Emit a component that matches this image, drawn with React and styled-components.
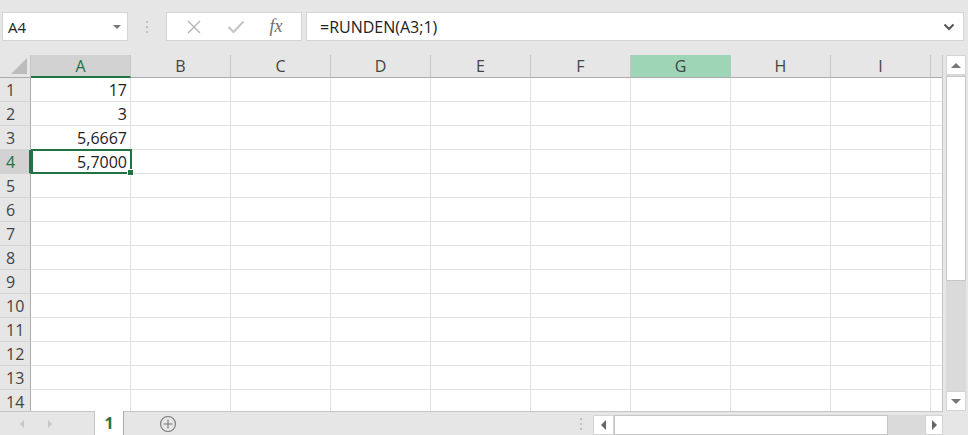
import React from "react";
import styled, { createGlobalStyle } from "styled-components";

const Global = createGlobalStyle`
  html, body { margin: 0; padding: 0; background: #e6e6e6; }
  body { font-family: "Open Sans", "Noto Sans", sans-serif; }
`;

const Root = styled.div`
  width: 968px;
  height: 435px;
  background: #e6e6e6;
  display: flex;
  flex-direction: column;
  overflow: hidden;
`;

const TopBar = styled.div`
  height: 55px;
  flex-shrink: 0;
  display: flex;
  align-items: flex-start;
  padding: 12px 4px 0 2px;
  box-sizing: border-box;
`;

const Box = styled.div`
  height: 29px;
  box-sizing: border-box;
  background: #fff;
  border: 1px solid #d4d4d4;
  display: flex;
  align-items: center;
`;

const NameBox = styled(Box)`
  width: 126px;
  padding: 0 6px 0 5px;
  justify-content: space-between;
  font-size: 15px;
  color: #222;
`;

const Dots = styled.div`
  width: 38px;
  height: 29px;
  display: flex;
  flex-direction: column;
  align-items: center;
  justify-content: center;
  gap: 3px;
  span {
    width: 2px;
    height: 2px;
    background: #b4b4b4;
    border-radius: 1px;
  }
`;

const FxBox = styled(Box)`
  width: 136px;
  justify-content: space-around;
  padding: 0 6px;
`;

const FormulaBox = styled(Box)`
  flex: 1;
  margin-left: 4px;
  padding: 0 8px 0 13px;
  justify-content: space-between;
  font-size: 16px;
  color: #222;
`;

const Fx = styled.span`
  font-family: "Liberation Serif", serif;
  font-style: italic;
  font-size: 18px;
  color: #6d6d6d;
`;

const Middle = styled.div`
  display: flex;
  height: 357px;
  flex-shrink: 0;
`;

const Sheet = styled.div`
  width: 943px;
  height: 357px;
  overflow: hidden;
  display: grid;
  grid-template-columns: 31px repeat(9, 100px) 12px;
  grid-template-rows: 23px repeat(14, 24px);
  border-right: 1px solid #c6c6c6;
  box-sizing: border-box;
  border-bottom: 1px solid #c6c6c6;
`;

const Corner = styled.div`
  background: #e6e6e6;
  border-right: 1px solid #c6c6c6;
  border-bottom: 1px solid #ababab;
  box-sizing: border-box;
  position: relative;
  &::after {
    content: "";
    position: absolute;
    right: 3px;
    bottom: 3px;
    border-style: solid;
    border-width: 0 0 16px 16px;
    border-color: transparent transparent #bcbcbc transparent;
  }
`;

const ColHead = styled.div`
  background: ${(p) => (p.$sel ? "#d2d2d2" : p.$hl ? "#9fd5b7" : "#e6e6e6")};
  border-right: 1px solid ${(p) => (p.$hl ? "#9fd5b7" : "#c6c6c6")};
  border-bottom: ${(p) => (p.$sel ? "2px solid #217346" : "1px solid #ababab")};
  box-sizing: border-box;
  display: flex;
  align-items: center;
  justify-content: center;
  font-size: 16px;
  color: ${(p) => (p.$sel ? "#217346" : "#444")};
  padding-top: ${(p) => (p.$sel ? "1px" : "0")};
`;

const RowHead = styled.div`
  background: ${(p) => (p.$sel ? "#d2d2d2" : "#e6e6e6")};
  border-right: ${(p) => (p.$sel ? "2px solid #217346" : "1px solid #ababab")};
  border-bottom: 1px solid #d4d4d4;
  box-sizing: border-box;
  display: flex;
  align-items: center;
  padding-left: 6px;
  font-size: 16px;
  color: ${(p) => (p.$sel ? "#217346" : "#444")};
`;

const Cell = styled.div`
  background: #fff;
  border-right: 1px solid #e1e1e1;
  border-bottom: 1px solid #e1e1e1;
  box-sizing: border-box;
  display: flex;
  align-items: center;
  justify-content: flex-end;
  padding-right: 3px;
  font-size: 16px;
  color: #222;
  position: relative;
  ${(p) => (p.$active ? "z-index: 3;" : "")}
`;

const Selection = styled.div`
  position: absolute;
  left: 0;
  top: -1px;
  right: -2px;
  bottom: -1px;
  border: 2px solid #217346;
  pointer-events: none;
  z-index: 2;
  &::after {
    content: "";
    position: absolute;
    right: -4px;
    bottom: -4px;
    width: 5px;
    height: 5px;
    background: #217346;
    border: 1px solid #fff;
  }
`;

const CellText = styled.span`
  position: relative;
  z-index: 1;
`;

const ScrollGap = styled.div`
  width: 25px;
  display: flex;
  justify-content: flex-end;
  padding: 0 2px 0 0;
  box-sizing: border-box;
`;

const VScroll = styled.div`
  width: 20px;
  display: flex;
  flex-direction: column;
  background: #dadada;
  height: 356px;
`;

const SBtn = styled.div`
  width: ${(p) => p.$w || "20px"};
  height: ${(p) => p.$h || "20px"};
  background: #fff;
  border: 1px solid #d4d4d4;
  box-sizing: border-box;
  display: flex;
  align-items: center;
  justify-content: center;
  flex-shrink: 0;
`;

const Thumb = styled.div`
  background: #fff;
  border: 1px solid #c6c6c6;
  box-sizing: border-box;
  ${(p) => (p.$v ? "height: 205px; margin-top: 1px;" : "width: 274px; height: 100%;")}
`;

const Tri = styled.span`
  width: 0;
  height: 0;
  border-style: solid;
  ${(p) =>
    p.$dir === "up"
      ? `border-width: 0 5px 5px 5px; border-color: transparent transparent ${p.$c || "#666"} transparent;`
      : p.$dir === "down"
      ? `border-width: 5px 5px 0 5px; border-color: ${p.$c || "#666"} transparent transparent transparent;`
      : p.$dir === "left"
      ? `border-width: 5px 5px 5px 0; border-color: transparent ${p.$c || "#666"} transparent transparent;`
      : `border-width: 5px 0 5px 5px; border-color: transparent transparent transparent ${p.$c || "#666"};`}
`;

const Bottom = styled.div`
  height: 23px;
  display: flex;
  align-items: stretch;
`;

const NavArrows = styled.div`
  width: 94px;
  display: flex;
  align-items: center;
  padding-left: 20px;
  gap: 24px;
  box-sizing: border-box;
`;

const Tab = styled.div`
  width: 30px;
  background: #fff;
  border-left: 1px solid #c6c6c6;
  border-right: 1px solid #ababab;
  margin-top: -1px;
  box-sizing: border-box;
  display: flex;
  align-items: center;
  justify-content: center;
  font-weight: 700;
  font-size: 16px;
  color: #217346;
`;

const AddArea = styled.div`
  width: 445px;
  display: flex;
  align-items: center;
  padding-left: 35px;
  box-sizing: border-box;
`;

const HDots = styled(Dots)`
  width: 24px;
  height: 23px;
`;

const HScroll = styled.div`
  width: 350px;
  display: flex;
  background: #dadada;
  margin-top: 3px;
  height: 20px;
`;

const Track = styled.div`
  flex: 1;
`;

const Chevron = () => (
  <svg width="12" height="8" viewBox="0 0 12 8">
    <path d="M1.5 1.5 L6 6 L10.5 1.5" fill="none" stroke="#555" strokeWidth="2" />
  </svg>
);

const XIcon = () => (
  <svg width="16" height="16" viewBox="0 0 16 16">
    <path d="M2 2 L14 14 M14 2 L2 14" stroke="#b3b3b3" strokeWidth="1.3" />
  </svg>
);

const CheckIcon = () => (
  <svg width="18" height="14" viewBox="0 0 18 14">
    <path d="M1.5 7 L6.5 12 L16.5 1.5" fill="none" stroke="#c4c4c4" strokeWidth="2" />
  </svg>
);

const PlusIcon = () => (
  <svg width="18" height="18" viewBox="0 0 18 18">
    <circle cx="9" cy="9" r="7.5" fill="none" stroke="#777" strokeWidth="1.1" />
    <path d="M9 4.5 V13.5 M4.5 9 H13.5" stroke="#777" strokeWidth="1.1" />
  </svg>
);

const cols = ["A", "B", "C", "D", "E", "F", "G", "H", "I", ""];
const values = { 1: "17", 2: "3", 3: "5,6667", 4: "5,7000" };

export default function App() {
  const rows = Array.from({ length: 14 }, (_, i) => i + 1);
  return (
    <Root>
      <Global />
      <TopBar>
        <NameBox>
          <span>A4</span>
          <Tri $dir="down" $c="#777" style={{ borderWidth: "4px 4px 0 4px" }} />
        </NameBox>
        <Dots>
          <span />
          <span />
          <span />
        </Dots>
        <FxBox>
          <XIcon />
          <CheckIcon />
          <Fx>fx</Fx>
        </FxBox>
        <FormulaBox>
          <span>=RUNDEN(A3;1)</span>
          <Chevron />
        </FormulaBox>
      </TopBar>
      <Middle>
        <Sheet>
          <Corner />
          {cols.map((c, i) => (
            <ColHead key={"h" + i} $sel={c === "A"} $hl={c === "G"}>
              {c}
            </ColHead>
          ))}
          {rows.map((r) => (
            <React.Fragment key={r}>
              <RowHead $sel={r === 4}>{r}</RowHead>
              {cols.map((c, i) => {
                const active = c === "A" && r === 4;
                return (
                  <Cell key={c + i} $active={active}>
                    {c === "A" && values[r] ? <CellText>{values[r]}</CellText> : null}
                    {active ? <Selection /> : null}
                  </Cell>
                );
              })}
            </React.Fragment>
          ))}
        </Sheet>
        <ScrollGap>
          <VScroll>
            <SBtn>
              <Tri $dir="up" $c="#777" />
            </SBtn>
            <Thumb $v />
            <Track />
            <SBtn>
              <Tri $dir="down" $c="#777" />
            </SBtn>
          </VScroll>
        </ScrollGap>
      </Middle>
      <Bottom>
        <NavArrows>
          <Tri $dir="left" $c="#c8c8c8" style={{ borderWidth: "4px 4px 4px 0" }} />
          <Tri $dir="right" $c="#c8c8c8" style={{ borderWidth: "4px 0 4px 4px" }} />
        </NavArrows>
        <Tab>1</Tab>
        <AddArea>
          <PlusIcon />
        </AddArea>
        <HDots>
          <span />
          <span />
          <span />
        </HDots>
        <HScroll>
          <SBtn $w="21px">
            <Tri $dir="left" $c="#666" />
          </SBtn>
          <Thumb />
          <Track />
          <SBtn $w="18px">
            <Tri $dir="right" $c="#666" />
          </SBtn>
        </HScroll>
      </Bottom>
    </Root>
  );
}
